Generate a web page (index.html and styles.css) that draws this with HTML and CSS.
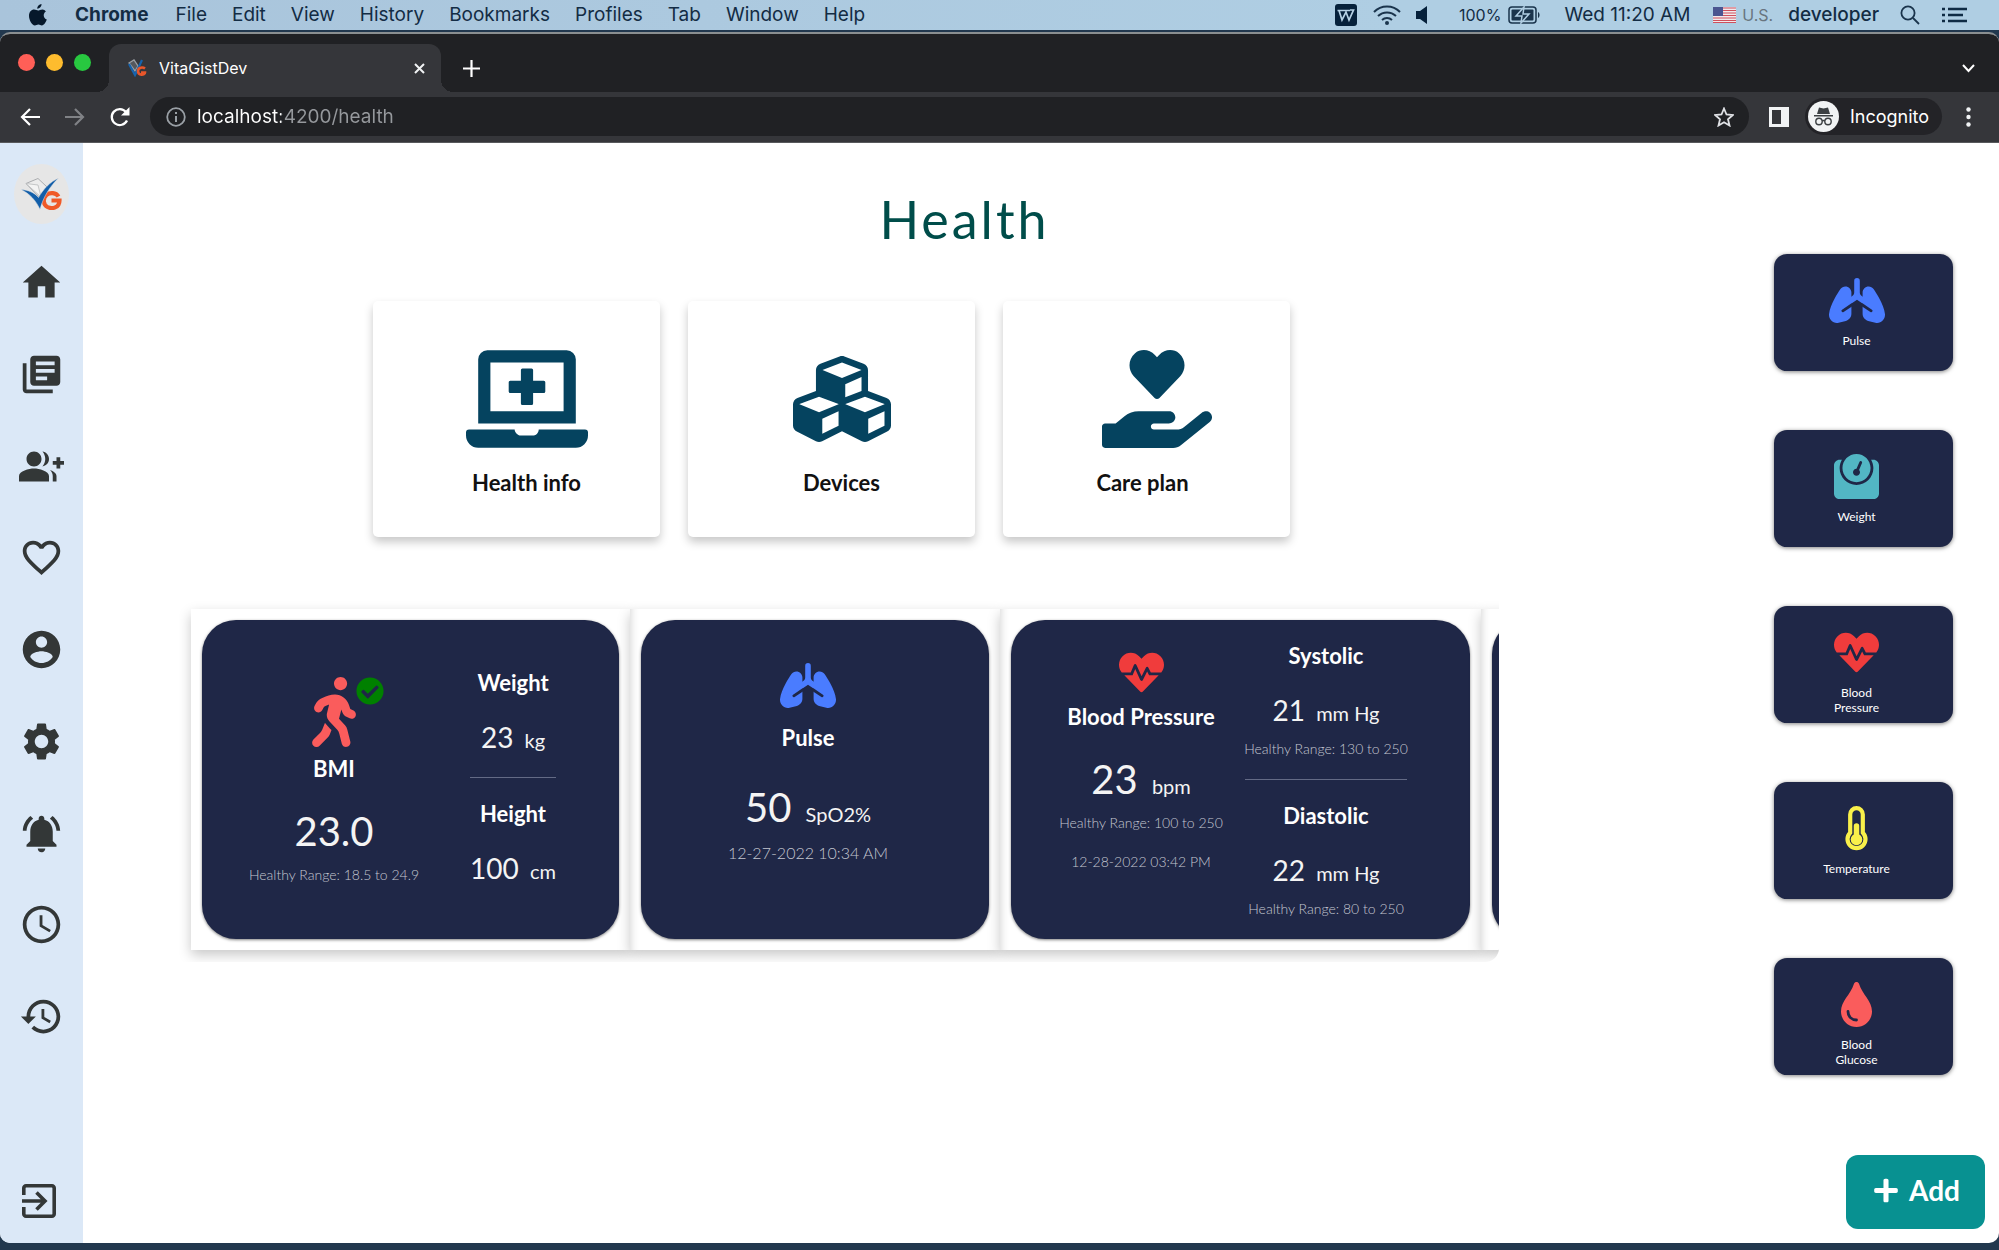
FILE: index.html
```html
<!DOCTYPE html>
<html lang="en">
<head>
<meta charset="utf-8">
<meta name="viewport" content="width=device-width, initial-scale=1">
<title>VitaGistDev</title>
<link rel="stylesheet" href="styles.css">
</head>
<body>

<!-- Shared icon symbols -->
<svg class="symbols" width="0" height="0" aria-hidden="true">
  <symbol id="i-lungs" viewBox="0 0 640 512">
    <path d="M256 212V165C256 127 225 96 186.700 96c-21.700 0-42.800 10.200-55.800 28.800C115.500 147 86.600 190 60 242 33 293 7 354 0 412v11c0 49 40 89 89 89 7 0 14.500-1 21.500-3l82-20c37.500-9.500 63.500-43 63.500-81zM384 212V165c0-38 31-69 69.300-69 21.700 0 42.800 10.200 55.800 28.800C524.500 147 553.400 190 580 242c27 51 53 112 60 170v11c0 49-40 89-89 89-7 0-14.500-1-21.500-3l-82-20C410 479.500 384 446 384 408z"/>
    <path d="M288 32a32 32 0 0 1 64 0v132c0 16 8 31 22 40l26 17v80l-80-53-80 53v-80l26-17c14-9 22-24 22-40z"/>
    <path class="cut" d="M262 305L158 374M378 305l104 69"/>
  </symbol>
  <symbol id="i-heartbeat" viewBox="0 0 512 512">
    <path d="M320.200 243.800l-49.700 99.400c-6 12.100-23.400 11.700-28.900-.6l-56.900-126.300-30 71.700H60.600l182.500 186.500c7.100 7.300 18.600 7.300 25.700 0L451.400 288H342.300l-22.100-44.200zM473.700 73.900l-2.400-2.500c-51.500-52.600-135.800-52.600-187.400 0L256 100l-27.900-28.500c-51.500-52.700-135.900-52.700-187.400 0l-2.400 2.400C-10.400 123.700-12.500 203 31 256h102.400l35.900-86.200c5.400-12.900 23.600-13.100 29.400-.4l58.200 129.300 49-97.900c5.900-11.800 22.700-11.800 28.600 0l27.600 55.200H481c43.500-53 41.400-132.300-7.300-182.100z"/>
  </symbol>
  <symbol id="i-logo" viewBox="0 0 42 32">
    <path d="M5 5.500L17 .5 26 9l-7 11z" fill="#ececec" stroke="#a9abae" stroke-width="1"/>
    <path d="M5 5.500L17 7l3 12z" fill="#f4f4f4" stroke="#b9bbbd" stroke-width=".8"/>
    <path d="M37.500 18.500C35 14.500 29 14 25.500 17c-4 3.500-3.500 9.500 1 12 4.500 2.300 12 .8 12-6.500h-8" fill="none" stroke="#f05a28" stroke-width="4.200"/>
    <path d="M0 11.500c7 .5 13.500 3 17.500 8C22 11.500 29 4 37.500 0 29.500 8 22.500 18 19 31.500 15 22.500 8.500 15.500 0 11.500z" fill="#125ea9" stroke="#e6e6e6" stroke-width=".5"/>
  </symbol>
</svg>

<header class="menubar">
  <nav class="menus" aria-label="Application menu">
    <svg class="apple" viewBox="0 0 18 22" aria-hidden="true"><path d="M12.500 0c.2 2.400-2 4.800-4.200 4.700C8.100 2.400 10.300.2 12.500 0zM16.900 7.500c-3.300 2-2.700 6.800.9 8.100-.9 2.600-2.900 5.900-4.900 5.900-1.400 0-1.900-.9-3.500-.9s-2.200.9-3.500.9C3 21.500 0 16 0 11.700 0 7.900 2.400 5.500 5.100 5.500c1.600 0 2.900 1 4 1 1 0 2.500-1.100 4.400-1.100 1.300 0 2.600.7 3.400 2.100z"/></svg>
    <button class="app-name">Chrome</button>
    <button>File</button>
    <button>Edit</button>
    <button>View</button>
    <button>History</button>
    <button>Bookmarks</button>
    <button>Profiles</button>
    <button>Tab</button>
    <button>Window</button>
    <button>Help</button>
  </nav>
  <div class="status">
    <svg class="s-wps" width="22" height="22" viewBox="0 0 22 22" aria-hidden="true"><rect width="22" height="22" rx="3" fill="#06213b"/><path d="M2.500 6.500H15M4 6.500L7 16l4-8 3 8L18.500 6H15" fill="none" stroke="#b5d0e4" stroke-width="1.700"/></svg>
    <svg class="s-wifi" width="28" height="20" viewBox="0 0 28 20" aria-hidden="true"><g fill="none" stroke="#1a344c" stroke-width="2"><path d="M1 7a18 18 0 0 1 26 0M5 11a13 13 0 0 1 18 0M9 15a7.500 7.500 0 0 1 10 0"/></g><circle cx="14" cy="18" r="2" fill="#1a344c"/></svg>
    <svg class="s-volume" width="11" height="18" viewBox="0 0 11 18" aria-hidden="true"><path d="M0 5h4l7-5v18l-7-5H0z" fill="#06213b"/></svg>
    <span class="s-charge">100%</span>
    <svg class="s-battery" width="32" height="18" viewBox="0 0 32 18" aria-hidden="true"><rect x="1" y="1" width="27" height="16" rx="3" fill="none" stroke="#1a344c" stroke-width="1.500"/><rect x="3.500" y="3.500" width="22" height="11" rx="1" fill="#1a344c"/><path d="M16 1l-8 9h6l-1 7 8-9h-6z" fill="#1a344c" stroke="#b0cde2" stroke-width="1.500"/><path d="M30 6c2 1 2 5 0 6z" fill="#1a344c"/></svg>
    <span class="s-clock">Wed 11:20 AM</span>
    <svg class="s-flag" width="23" height="16" viewBox="0 0 23 16" aria-hidden="true"><rect width="23" height="16" fill="#f1e9ec"/><path d="M0 1h23M0 3.500h23M0 6h23M0 8.500h23M0 11h23M0 13.500h23M0 15.500h23" stroke="#d0505c" stroke-width="1.200"/><rect width="10" height="9" fill="#4b5590"/></svg>
    <span class="s-locale">U.S.</span>
    <span class="s-user">developer</span>
    <svg class="s-search" width="20" height="20" viewBox="0 0 20 20" aria-hidden="true"><g fill="none" stroke="#1a344c" stroke-width="1.800"><circle cx="8" cy="8" r="6.600"/><path d="M13 13l6 6"/></g></svg>
    <svg class="s-list" width="25" height="16" viewBox="0 0 25 16" aria-hidden="true"><path d="M0 2h3M6 2h19M0 8h3M6 8h15M0 14h3M6 14h19" stroke="#0f2b44" stroke-width="2.400"/></svg>
  </div>
</header>

<div class="window">
  <div class="tabstrip">
    <div class="lights"><span class="light red"></span><span class="light amber"></span><span class="light green"></span></div>
    <div class="tab">
      <svg width="20" height="18" viewBox="0 0 20 18" aria-hidden="true"><path d="M2 4l5-3 4 6-3 5z" fill="#55585d" stroke="#9a9ea3" stroke-width="1.300"/><path d="M2 5l6 11L15 1" fill="none" stroke="#1663ad" stroke-width="2.200"/><path d="M18 9.500c-2-1.500-7-1.500-7 2.500 0 5 7 4.500 7 1.500h-4" fill="none" stroke="#e8562a" stroke-width="2.600"/></svg>
      <span class="tab-title">VitaGistDev</span>
      <button class="tab-close" aria-label="Close tab"><svg width="11" height="11" viewBox="0 0 11 11"><path d="M1 1l9 9M10 1l-9 9" stroke="#f1f3f4" stroke-width="2"/></svg></button>
    </div>
    <button class="new-tab" aria-label="New tab"><svg width="17" height="17" viewBox="0 0 17 17"><path d="M8.500 0v17M0 8.500h17" stroke="#fff" stroke-width="2.200"/></svg></button>
    <button class="tab-list" aria-label="Search tabs"><svg width="13" height="9" viewBox="0 0 13 9"><path d="M1 1l5.500 6L12 1" fill="none" stroke="#fff" stroke-width="2"/></svg></button>
  </div>

  <div class="toolbar">
    <button aria-label="Back"><svg width="20" height="18" viewBox="0 0 20 18"><path d="M20 9H2M10 1L2 9l8 8" fill="none" stroke="#fff" stroke-width="2.200"/></svg></button>
    <button aria-label="Forward"><svg width="20" height="18" viewBox="0 0 20 18"><path d="M0 9h18M10 1l8 8-8 8" fill="none" stroke="#808286" stroke-width="2.200"/></svg></button>
    <button aria-label="Reload"><svg width="20" height="20" viewBox="0 0 20 20"><path d="M17 13.500A8 8 0 1 1 16 5" fill="none" stroke="#fff" stroke-width="2.300"/><path d="M19.500 0v8.500H11z" fill="#fff"/></svg></button>
    <div class="address">
      <svg width="20" height="20" viewBox="0 0 20 20" aria-hidden="true"><circle cx="10" cy="10" r="8.800" fill="none" stroke="#9aa0a6" stroke-width="1.800"/><path d="M10 9v6M10 5v2" stroke="#9aa0a6" stroke-width="2"/></svg>
      <input class="url" type="text" aria-label="Address" value="localhost:4200/health">
      <button aria-label="Bookmark"><svg width="20" height="20" viewBox="0 0 20 20"><path d="M10 1.500l2.500 6 6.300.5-4.800 4.200 1.500 6.300L10 15.200l-5.500 3.300L6 12.200 1.200 8l6.300-.5z" fill="none" stroke="#dfe1e5" stroke-width="1.800"/></svg></button>
    </div>
    <button aria-label="Side panel"><svg width="20" height="20" viewBox="0 0 20 20"><path d="M0 0h20v20H0zM3 3v14h9V3z" fill="#f1f3f4" fill-rule="evenodd"/></svg></button>
    <button class="incognito">
      <svg width="31" height="31" viewBox="0 0 31 31" aria-hidden="true"><circle cx="15.500" cy="15.500" r="15.500" fill="#f1f3f4"/><path d="M6 14h19v1.500H6zM9 13l2-6.500 4.500 1 4.500-1L22 13z" fill="#3c4043"/><g fill="none" stroke="#3c4043" stroke-width="1.400"><circle cx="11" cy="20.500" r="3.200"/><circle cx="20" cy="20.500" r="3.200"/><path d="M14 20q1.500-1 3 0"/></g></svg>
      Incognito
    </button>
    <button aria-label="Menu"><svg width="5" height="20" viewBox="0 0 5 20"><g fill="#f1f3f4"><circle cx="2.500" cy="2.500" r="2.200"/><circle cx="2.500" cy="10" r="2.200"/><circle cx="2.500" cy="17.500" r="2.200"/></g></svg></button>
  </div>

  <div class="app">
    <nav class="sidebar" aria-label="Sections">
      <a class="logo" href="#" aria-label="VitaGist"><svg width="42" height="32"><use href="#i-logo"/></svg></a>
      <div class="side-links">
        <a href="#" aria-label="Home"><svg viewBox="0 0 24 24"><path d="M10 20v-6h4v6h5v-8h3L12 3 2 12h3v8z"/></svg></a>
        <a href="#" aria-label="Library"><svg viewBox="0 0 24 24"><path d="M4 6H2v14c0 1.100.9 2 2 2h14v-2H4V6zm16-4H8c-1.100 0-2 .9-2 2v12c0 1.100.9 2 2 2h12c1.100 0 2-.9 2-2V4c0-1.100-.9-2-2-2zm-1 9H9V9h10v2zm-4 4H9v-2h6v2zm4-8H9V5h10v2z"/></svg></a>
        <a href="#" aria-label="Add people"><svg viewBox="0 0 24 24"><path d="M22 9V7h-2v2h-2v2h2v2h2v-2h2V9zM8 12c2.210 0 4-1.790 4-4s-1.790-4-4-4-4 1.790-4 4 1.790 4 4 4zm0 1c-2.670 0-8 1.340-8 4v3h16v-3c0-2.660-5.330-4-8-4zM12.510 4.050C13.430 5.110 14 6.490 14 8s-.57 2.890-1.490 3.950C14.470 11.700 16 10.040 16 8s-1.530-3.700-3.490-3.950zM16.530 13.830C17.420 14.660 18 15.700 18 17v3h2v-3c0-1.450-1.590-2.510-3.470-3.170z"/></svg></a>
        <a href="#" aria-label="Health"><svg viewBox="0 0 24 24"><path d="M16.500 3c-1.740 0-3.410.81-4.500 2.090C10.910 3.810 9.240 3 7.500 3 4.420 3 2 5.420 2 8.500c0 3.780 3.400 6.860 8.550 11.540L12 21.350l1.450-1.320C18.600 15.360 22 12.280 22 8.500 22 5.420 19.580 3 16.500 3zm-4.400 15.550l-.1.1-.1-.1C7.140 14.240 4 11.390 4 8.500 4 6.500 5.500 5 7.500 5c1.540 0 3.040.99 3.570 2.360h1.870C13.460 5.990 14.960 5 16.500 5c2 0 3.500 1.500 3.500 3.500 0 2.890-3.140 5.740-7.900 10.050z"/></svg></a>
        <a href="#" aria-label="Account"><svg viewBox="0 0 24 24"><path d="M12 2C6.480 2 2 6.480 2 12s4.480 10 10 10 10-4.480 10-10S17.520 2 12 2zm0 3c1.660 0 3 1.340 3 3s-1.340 3-3 3-3-1.340-3-3 1.340-3 3-3zm0 14.200c-2.500 0-4.710-1.280-6-3.220.03-1.990 4-3.080 6-3.080 1.990 0 5.970 1.090 6 3.080-1.290 1.940-3.500 3.220-6 3.220z"/></svg></a>
        <a href="#" aria-label="Settings"><svg viewBox="0 0 24 24"><path d="M19.140 12.940c.04-.3.06-.61.06-.94 0-.32-.02-.64-.07-.94l2.030-1.580c.18-.14.23-.41.12-.61l-1.920-3.320c-.12-.22-.37-.29-.59-.22l-2.390.96c-.5-.38-1.030-.7-1.620-.94l-.36-2.540c-.04-.24-.24-.41-.48-.41h-3.840c-.24 0-.43.17-.47.41l-.36 2.540c-.59.24-1.130.57-1.620.94l-2.390-.96c-.22-.08-.47 0-.59.22L2.740 8.870c-.12.21-.08.47.12.61l2.030 1.580c-.05.3-.09.63-.09.94s.02.64.07.94l-2.030 1.580c-.18.14-.23.41-.12.61l1.920 3.320c.12.22.37.29.59.22l2.390-.96c.5.38 1.030.7 1.620.94l.36 2.540c.05.24.24.41.48.41h3.840c.24 0 .44-.17.47-.41l.36-2.540c.59-.24 1.130-.56 1.620-.94l2.390.96c.22.08.47 0 .59-.22l1.920-3.320c.12-.22.07-.47-.12-.61l-2.010-1.580zM12 15.600c-1.980 0-3.600-1.620-3.600-3.600s1.620-3.600 3.600-3.600 3.600 1.620 3.600 3.600-1.620 3.600-3.600 3.600z"/></svg></a>
        <a href="#" aria-label="Notifications"><svg viewBox="0 0 24 24"><path d="M7.580 4.080L6.150 2.650C3.750 4.480 2.170 7.300 2.030 10.500h2c.15-2.650 1.510-4.970 3.550-6.420zm12.390 6.420h2c-.15-3.200-1.730-6.020-4.120-7.850l-1.420 1.430c2.020 1.450 3.390 3.770 3.540 6.420zM18 11c0-3.070-1.640-5.640-4.500-6.320V4c0-.83-.67-1.500-1.500-1.500s-1.500.67-1.500 1.500v.68C7.630 5.360 6 7.920 6 11v5l-2 2v1h16v-1l-2-2v-5zm-6 11c.14 0 .27-.01.4-.04.65-.14 1.180-.58 1.440-1.180.1-.24.15-.5.15-.78h-4c.01 1.100.9 2 2.010 2z"/></svg></a>
        <a href="#" aria-label="Schedule"><svg viewBox="0 0 24 24"><path d="M11.990 2C6.470 2 2 6.480 2 12s4.470 10 9.990 10C17.520 22 22 17.520 22 12S17.520 2 11.990 2zM12 20c-4.420 0-8-3.580-8-8s3.580-8 8-8 8 3.580 8 8-3.580 8-8 8zm.5-13H11v6l5.250 3.150.75-1.230-4.500-2.670z"/></svg></a>
        <a href="#" aria-label="History"><svg viewBox="0 0 24 24"><path d="M13 3c-4.970 0-9 4.030-9 9H1l3.890 3.890.07.14L9 12H6c0-3.870 3.130-7 7-7s7 3.130 7 7-3.130 7-7 7c-1.930 0-3.680-.79-4.940-2.060l-1.420 1.420C8.270 19.990 10.510 21 13 21c4.970 0 9-4.030 9-9s-4.030-9-9-9zm-1 5v5l4.280 2.540.72-1.210-3.500-2.080V8H12z"/></svg></a>
      </div>
      <a class="logout" href="#" aria-label="Log out"><svg width="34" height="34" viewBox="0 0 34 34"><path d="M1.800 11V4c0-1.200 1-2.200 2.200-2.200h26c1.200 0 2.200 1 2.200 2.200v26c0 1.200-1 2.200-2.200 2.200H4c-1.200 0-2.200-1-2.200-2.200v-7M0 17h23M14.500 8.500L23 17l-8.500 8.500" fill="none" stroke="#333737" stroke-width="3.600"/></svg></a>
    </nav>

    <main class="page">
      <h1>Health</h1>
      <div class="columns">
        <div class="center">
          <div class="shortcuts">
            <a class="shortcut" href="#">
              <svg width="122" height="98" viewBox="0 0 640 512" aria-hidden="true"><path d="M232 224h56v56a8 8 0 0 0 8 8h48a8 8 0 0 0 8-8v-56h56a8 8 0 0 0 8-8v-48a8 8 0 0 0-8-8h-56v-56a8 8 0 0 0-8-8h-48a8 8 0 0 0-8 8v56h-56a8 8 0 0 0-8 8v48a8 8 0 0 0 8 8zM576 48a48.140 48.140 0 0 0-48-48H112a48.140 48.140 0 0 0-48 48v336h512zm-64 272H128V64h384zm112 96H381.540c-.74 19.810-14.710 32-32.740 32H288c-18.690 0-33-17.470-32.770-32H16a16 16 0 0 0-16 16v16a64.190 64.190 0 0 0 64 64h512a64.190 64.190 0 0 0 64-64v-16a16 16 0 0 0-16-16z"/></svg>
              <span>Health info</span>
            </a>
            <a class="shortcut" href="#">
              <svg width="98" height="98" viewBox="0 0 512 512" aria-hidden="true"><path d="M488.600 250.200L392 214V105.500c0-15-9.300-28.400-23.400-33.700l-100-37.500c-8.100-3.100-17.100-3.100-25.300 0l-100 37.500c-14.100 5.300-23.400 18.700-23.400 33.700V214l-96.600 36.200C9.300 255.500 0 268.900 0 283.900V394c0 13.600 7.700 26.100 19.900 32.200l100 50c10.100 5.100 22.100 5.100 32.200 0l103.900-52 103.900 52c10.100 5.100 22.100 5.100 32.200 0l100-50c12.200-6.100 19.900-18.600 19.900-32.200V283.900c0-15-9.300-28.400-23.400-33.700zM358 214.800l-85 31.900v-68.200l85-37v73.300zM154 104.100l102-38.200 102 38.200v.6l-102 41.400-102-41.400v-.6zm84 291.100l-85 42.500v-79.100l85-38.800v75.400zm0-112l-102 41.400-102-41.400v-.6l102-38.200 102 38.200v.6zm240 112l-85 42.500v-79.100l85-38.800v75.400zm0-112l-102 41.400-102-41.400v-.6l102-38.200 102 38.200v.6z"/></svg>
              <span>Devices</span>
            </a>
            <a class="shortcut care" href="#">
              <svg width="110" height="98" viewBox="0 0 576 512" aria-hidden="true"><path d="M275.300 250.500c7 7.400 18.400 7.400 25.500 0l108.900-114.200c31.600-33.200 29.800-88.200-5.600-118.800-30.800-26.700-76.700-21.900-104.900 7.700L288 36.900l-11.100-11.600C248.700-4.400 202.800-9.200 172 17.500c-35.300 30.600-37.200 85.600-5.600 118.800l108.900 114.200zm290 77.600c-11.800-10.700-30.200-10-42.600 0L430.300 402c-11.300 9.100-25.400 14-40 14H272c-8.800 0-16-7.200-16-16s7.200-16 16-16h78.300c15.900 0 30.700-10.900 33.300-26.600 3.300-20-12.100-37.400-31.600-37.400H192c-27 0-53.100 9.300-74.100 26.300L71.400 384H16c-8.800 0-16 7.200-16 16v96c0 8.800 7.200 16 16 16h356.800c14.500 0 28.600-4.900 40-14L564 377c15.200-12.100 16.400-35.300 1.300-48.900z"/></svg>
              <span>Care plan</span>
            </a>
          </div>

          <div class="readings">
            <div class="panel">
              <section class="reading bmi">
                <div class="stat main-stat">
                  <div class="walker">
                    <svg width="44" height="70" viewBox="0 0 320 512" fill="#fa5c5c" aria-hidden="true"><path d="M208 96c26.500 0 48-21.500 48-48S234.500 0 208 0s-48 21.500-48 48 21.500 48 48 48zm94.500 149.100l-23.300-11.800-9.700-29.400c-14.700-44.600-55.700-75.800-102.200-75.900-36-.1-55.900 10.100-93.300 25.200-21.600 8.700-39.300 25.200-49.700 46.200L17.600 213c-7.800 15.800-1.500 35 14.200 42.900 15.600 7.900 34.600 1.500 42.500-14.300L81 228c3.500-7 9.300-12.500 16.500-15.400l26.800-10.800-15.200 60.700c-5.200 20.800.4 42.900 14.900 58.800l59.900 65.400c7.200 7.900 12.300 17.400 14.900 27.700l18.300 73.300c4.300 17.100 21.700 27.600 38.800 23.300 17.100-4.300 27.600-21.700 23.300-38.800l-22.200-89c-2.600-10.300-7.700-19.900-14.900-27.700l-45.500-49.700 17.200-68.700 5.500 16.500c5.300 16.100 16.700 29.400 31.700 37l23.300 11.800c15.600 7.900 34.600 1.500 42.500-14.300 7.700-15.700 1.400-35.100-14.300-43zM73.600 385.800c-3.200 8.100-8 15.400-14.200 21.500l-50 50.100c-12.500 12.500-12.500 32.800 0 45.300s32.700 12.500 45.200 0l59.400-59.400c6.100-6.100 10.900-13.400 14.200-21.500l13.500-33.800c-55.300-60.300-38.700-41.800-47.400-53.700l-20.700 51.500z"/></svg>
                    <svg class="check" width="28" height="28" viewBox="0 0 512 512" fill="#008000" aria-hidden="true"><path d="M504 256c0 136.967-111.033 248-248 248S8 392.967 8 256 119.033 8 256 8s248 111.033 248 248zM227.314 387.314l184-184c6.248-6.248 6.248-16.379 0-22.627l-22.627-22.627c-6.248-6.249-16.379-6.249-22.628 0L216 308.118l-70.059-70.059c-6.248-6.248-16.379-6.248-22.628 0l-22.627 22.627c-6.248 6.248-6.248 16.379 0 22.627l104 104c6.249 6.249 16.379 6.249 22.628.001z"/></svg>
                  </div>
                  <h2>BMI</h2>
                  <p class="value big">23.0</p>
                  <p class="note">Healthy Range: 18.5 to 24.9</p>
                </div>
                <div class="parts">
                  <div class="part"><h2>Weight</h2><p class="value">23 <small>kg</small></p></div>
                  <div class="part"><h2>Height</h2><p class="value">100 <small>cm</small></p></div>
                </div>
              </section>
            </div>
            <div class="panel">
              <section class="reading pulse">
                <div class="stat main-stat">
                  <svg width="56" height="45" fill="#4a7cff" aria-hidden="true"><use href="#i-lungs"/></svg>
                  <h2>Pulse</h2>
                  <p class="value big">50 <small>SpO2%</small></p>
                  <p class="note when">12-27-2022 10:34 AM</p>
                </div>
              </section>
            </div>
            <div class="panel">
              <section class="reading pressure">
                <div class="stat main-stat">
                  <svg width="45" height="45" fill="#f03c3c" aria-hidden="true"><use href="#i-heartbeat"/></svg>
                  <h2>Blood Pressure</h2>
                  <p class="value big">23 <small>bpm</small></p>
                  <p class="note">Healthy Range: 100 to 250</p>
                  <p class="note when">12-28-2022 03:42 PM</p>
                </div>
                <div class="parts">
                  <div class="part"><h2>Systolic</h2><p class="value">21 <small>mm Hg</small></p><p class="note">Healthy Range: 130 to 250</p></div>
                  <div class="part"><h2>Diastolic</h2><p class="value">22 <small>mm Hg</small></p><p class="note">Healthy Range: 80 to 250</p></div>
                </div>
              </section>
            </div>
            <div class="panel"><section class="reading next"></section></div>
          </div>
        </div>

        <aside class="metrics">
          <button class="metric"><svg width="56" height="45" fill="#4a7cff" aria-hidden="true"><use href="#i-lungs"/></svg><span>Pulse</span></button>
          <button class="metric"><svg width="45" height="45" viewBox="0 0 512 512" fill="#52b6c4" aria-hidden="true"><path d="M448 64h-25.980C438.440 92.280 448 125.010 448 160c0 105.870-86.130 192-192 192S64 265.870 64 160c0-34.990 9.560-67.720 25.980-96H64C28.710 64 0 92.710 0 128v320c0 35.290 28.710 64 64 64h384c35.290 0 64-28.710 64-64V128c0-35.290-28.710-64-64-64zM256 320c88.370 0 160-71.630 160-160S344.370 0 256 0 96 71.630 96 160s71.630 160 160 160zm-.3-151.940l33.580-78.360c3.500-8.170 12.940-11.920 21.030-8.410 8.120 3.480 11.880 12.890 8.410 21l-33.670 78.550C291.730 188 296 197.450 296 208c0 22.090-17.910 40-40 40s-40-17.910-40-40c0-21.980 17.760-39.770 39.700-39.940z"/></svg><span>Weight</span></button>
          <button class="metric"><svg width="45" height="45" fill="#f03c3c" aria-hidden="true"><use href="#i-heartbeat"/></svg><span>Blood Pressure</span></button>
          <button class="metric"><svg width="45" height="45" viewBox="0 0 45 45" aria-hidden="true"><path d="M16.200 8.500a6.300 6.300 0 0 1 12.600 0v18.200a9 9 0 1 1-12.600 0z" fill="none" stroke="#f9f04a" stroke-width="4.200"/><path d="M22.500 20v14" stroke="#f9f04a" stroke-width="5.500" stroke-linecap="round"/><circle cx="22.500" cy="33.500" r="5.800" fill="#f9f04a"/></svg><span>Temperature</span></button>
          <button class="metric"><svg width="45" height="45" viewBox="0 0 45 45" aria-hidden="true"><path d="M20 1.800c.8-2.400 4.200-2.400 5 0C28.500 13 38 19 38 29.500 38 38 31 45 22.500 45S7 38 7 29.500C7 19 16.500 13 20 1.800z" fill="#fa5c5c"/><path d="M14 29.500c0 5 3.500 8.500 8.500 8.500" fill="none" stroke="#1f2747" stroke-width="2.800" stroke-linecap="round"/></svg><span>Blood Glucose</span></button>
        </aside>
      </div>

      <footer class="actions">
        <button class="add"><svg width="24" height="27" viewBox="0 0 448 512" fill="#fff" aria-hidden="true"><path d="M416 208H272V64c0-17.670-14.330-32-32-32h-32c-17.670 0-32 14.330-32 32v144H32c-17.670 0-32 14.330-32 32v32c0 17.670 14.330 32 32 32h144v144c0 17.670 14.330 32 32 32h32c17.670 0 32-14.330 32-32V304h144c17.670 0 32-14.330 32-32v-32c0-17.670-14.330-32-32-32z"/></svg>Add</button>
      </footer>
    </main>
  </div>
</div>
</body>
</html>
```
FILE: styles.css
```css
* { box-sizing: border-box; }

body {
  margin: 0;
  min-height: 100vh;
  display: flex;
  flex-direction: column;
  padding-bottom: 7px;
  background: #22384e;
  font-family: Lato, "Liberation Sans", sans-serif;
}

h1, h2, p { margin: 0; }

button {
  display: flex;
  align-items: center;
  margin: 0;
  padding: 0;
  border: 0;
  background: none;
  color: inherit;
  font: inherit;
}

a { color: inherit; text-decoration: none; }
svg { display: block; flex: none; }
.symbols { position: absolute; }
.cut { fill: none; stroke: #1f2747; stroke-width: 32; stroke-linecap: round; }

/* System menu bar */
.menubar {
  display: flex;
  justify-content: space-between;
  align-items: center;
  height: 30px;
  padding: 0 32px 0 29px;
  background: linear-gradient(90deg, #a9c4db, #afcee3 70%);
  color: #132c44;
  font: 19px/30px Inter, "Liberation Sans", sans-serif;
}

.menus { display: flex; align-items: center; gap: 25px; }
.apple { width: 18px; height: 22px; margin-right: 3px; fill: #06182b; }
.app-name { margin-right: 2px; font-weight: 700; }
.status { display: flex; align-items: center; }
.s-wps { margin-right: 16px; }
.s-wifi { margin-right: 15px; }
.s-volume { margin-right: 32px; }
.s-charge { font-size: 16px; margin-right: 7px; }
.s-battery { margin-right: 24px; }
.s-clock { margin-right: 23px; }
.s-flag { margin-right: 6px; }
.s-locale { font-size: 16px; color: #68757f; margin-right: 15px; }
.s-user { font-weight: 500; margin-right: 21px; }
.s-search { margin-right: 22px; }

/* Browser window */
.window {
  flex: 1;
  display: flex;
  flex-direction: column;
  margin-top: 2px;
  border-top: 2px solid #8b8f91;
  border-radius: 10px;
  overflow: hidden;
  background: #fff;
  font-family: Inter, "Liberation Sans", sans-serif;
}

.tabstrip {
  display: flex;
  align-items: flex-end;
  height: 58px;
  padding: 0 24px 0 18px;
  background: #202124;
}

.lights { display: flex; gap: 11px; height: 58px; padding-top: 20px; margin-right: 18px; }
.light { width: 17px; height: 17px; border-radius: 50%; }
.red { background: #ff5f57; }
.amber { background: #febc2e; }
.green { background: #28c840; }

.tab {
  position: relative;
  display: flex;
  align-items: center;
  width: 332px;
  height: 48px;
  padding: 0 16px 0 18px;
  border-radius: 12px 12px 0 0;
  background: #35363a;
  color: #fff;
  font-size: 16px;
}

.tab::before, .tab::after {
  content: "";
  position: absolute;
  bottom: 0;
  width: 12px;
  height: 12px;
}
.tab::before { left: -12px; background: radial-gradient(circle at 0 0, transparent 12px, #35363a 12px); }
.tab::after { right: -12px; background: radial-gradient(circle at 100% 0, transparent 12px, #35363a 12px); }

.tab-title { flex: 1; margin-left: 12px; }
.new-tab { height: 48px; margin-left: 22px; }
.tab-list { height: 48px; margin-left: auto; }

.toolbar {
  display: flex;
  align-items: center;
  gap: 25px;
  height: 51px;
  padding: 0 28px 1px 20px;
  border-bottom: 1px solid #58595c;
  background: #35363a;
  color: #fff;
}

.address {
  flex: 1;
  display: flex;
  align-items: center;
  gap: 11px;
  height: 39px;
  margin: 0 -5px;
  padding: 0 15px 0 16px;
  border-radius: 20px;
  background: #202124;
}

.url {
  flex: 1;
  min-width: 0;
  padding: 0;
  border: 0;
  outline: 0;
  font: 19px/24px Inter, "Liberation Sans", sans-serif;
  background: linear-gradient(90deg, #fff 84px, #96999d 84px);
  -webkit-background-clip: text;
  background-clip: text;
  color: transparent;
}

.incognito {
  gap: 11px;
  height: 37px;
  margin: 0 -1px 0 -9px;
  padding: 0 13px 0 3px;
  border-radius: 19px;
  background: #232327;
  font-size: 18px;
}

/* Application */
.app { flex: 1; display: flex; }

.sidebar {
  flex: none;
  display: flex;
  flex-direction: column;
  align-items: center;
  width: 83px;
  padding: 21px 0 25px;
  background: #dbe8f7;
}

.logo {
  display: flex;
  align-items: center;
  justify-content: center;
  width: 55px;
  height: 60px;
  border-radius: 50%;
  background: #e6e6e6;
}

.side-links {
  flex: 1;
  display: flex;
  flex-direction: column;
  justify-content: space-between;
  margin: 36px 0 145px;
}
.side-links svg { width: 45px; height: 45px; fill: #333737; }
.logout { margin-right: 5px; }

.page {
  flex: 1;
  min-width: 0;
  display: flex;
  flex-direction: column;
  font-family: Lato, "Liberation Sans", sans-serif;
}

h1 {
  padding: 44px 153px 3px 0;
  color: #004d4a;
  font-size: 52px;
  line-height: 64px;
  font-weight: 400;
  letter-spacing: 3px;
  text-align: center;
}

.columns {
  display: flex;
  gap: 275px;
  padding-right: 46px;
}

.center { flex: 1; min-width: 0; padding-left: 96px; }

.shortcuts {
  display: flex;
  justify-content: center;
  gap: 28px;
  padding: 47px 28px 0 12px;
}

.shortcut {
  display: flex;
  flex-direction: column;
  align-items: center;
  width: 287px;
  height: 236px;
  padding: 49px 0 0 21px;
  border-radius: 5px;
  background: #fff;
  box-shadow: 0 5px 10px rgba(0, 0, 0, .22);
  color: #111;
  font-size: 22px;
  line-height: 28px;
  font-weight: 700;
}
.shortcut svg { fill: #05435f; margin-bottom: 21px; }
.care span { padding-right: 28px; }

.readings {
  display: flex;
  overflow: hidden;
  margin-top: 60px;
  padding: 12px 0 12px 12px;
  border-radius: 0 0 14px 0;
}

.panel {
  flex: none;
  padding: 11px;
  background: #fff;
  box-shadow: 0 5px 12px rgba(0, 0, 0, .22);
}
.panel + .panel { box-shadow: 0 5px 12px rgba(0, 0, 0, .22), inset 10px 0 10px -10px rgba(0, 0, 0, .2); }

.reading {
  display: grid;
  min-height: 319px;
  border-radius: 34px;
  background: #1f2747;
  box-shadow: 0 1px 3px rgba(0, 0, 0, .5);
  color: #fff;
  text-align: center;
  white-space: nowrap;
}

.bmi { width: 417px; grid-template-columns: 168px 86px; gap: 52px; padding-left: 48px; }
.pulse { width: 348px; padding-right: 14px; }
.pressure { width: 459px; grid-template-columns: 162px 162px; gap: 23px; padding-left: 49px; }
.next { width: 348px; }

.stat, .part { display: flex; flex-direction: column; align-items: center; }
.bmi .main-stat { padding-top: 57px; }
.pulse .main-stat { padding-top: 43px; }
.pressure .main-stat { padding-top: 30px; }

.walker { position: relative; margin-bottom: 8px; }
.check { position: absolute; top: 0; left: 44px; }
.pulse .stat > svg { margin-bottom: 16px; }
.pressure .stat > svg { margin-bottom: 8px; }

h2 { font-size: 22px; line-height: 28px; font-weight: 700; }

.value { margin-top: 20px; color: #f4f4f4; font-size: 28px; line-height: 40px; }
.value small { margin-left: 4px; font-size: 20px; line-height: 20px; }
.big { margin-top: 24px; font-size: 40px; line-height: 48px; }
.pulse .big { margin-top: 31px; }

.note { margin-top: 9px; color: #c3c6d0; font-size: 14px; line-height: 20px; font-weight: 300; }
.big + .note { margin-top: 10px; }
.note + .when { margin-top: 19px; }
.pulse .when { font-size: 16px; line-height: 24px; }

.bmi .parts { padding-top: 49px; }
.pressure .parts { padding-top: 22px; }
.part + .part { margin-top: 20px; padding-top: 22px; border-top: 1px solid #636a85; }

/* Metric list on the right */
.metrics { flex: none; width: 179px; display: flex; flex-direction: column; gap: 59px; }

.metric {
  flex-direction: column;
  height: 117px;
  padding: 24px 14px 0 0;
  border-radius: 13px;
  background: #1f2747;
  box-shadow: 0 1px 4px rgba(0, 0, 0, .5);
  color: #fff;
  font-size: 12px;
  line-height: 15px;
}
.metric svg { margin-bottom: 10px; }
.metric span { max-width: 72px; }

.actions {
  display: flex;
  justify-content: flex-end;
  margin-top: auto;
  padding: 14px;
}

.add {
  gap: 11px;
  height: 74px;
  padding: 0 25px 4px 28px;
  border-radius: 12px;
  background: #089191;
  color: #fff;
  font-size: 28px;
  font-weight: 700;
}
```
